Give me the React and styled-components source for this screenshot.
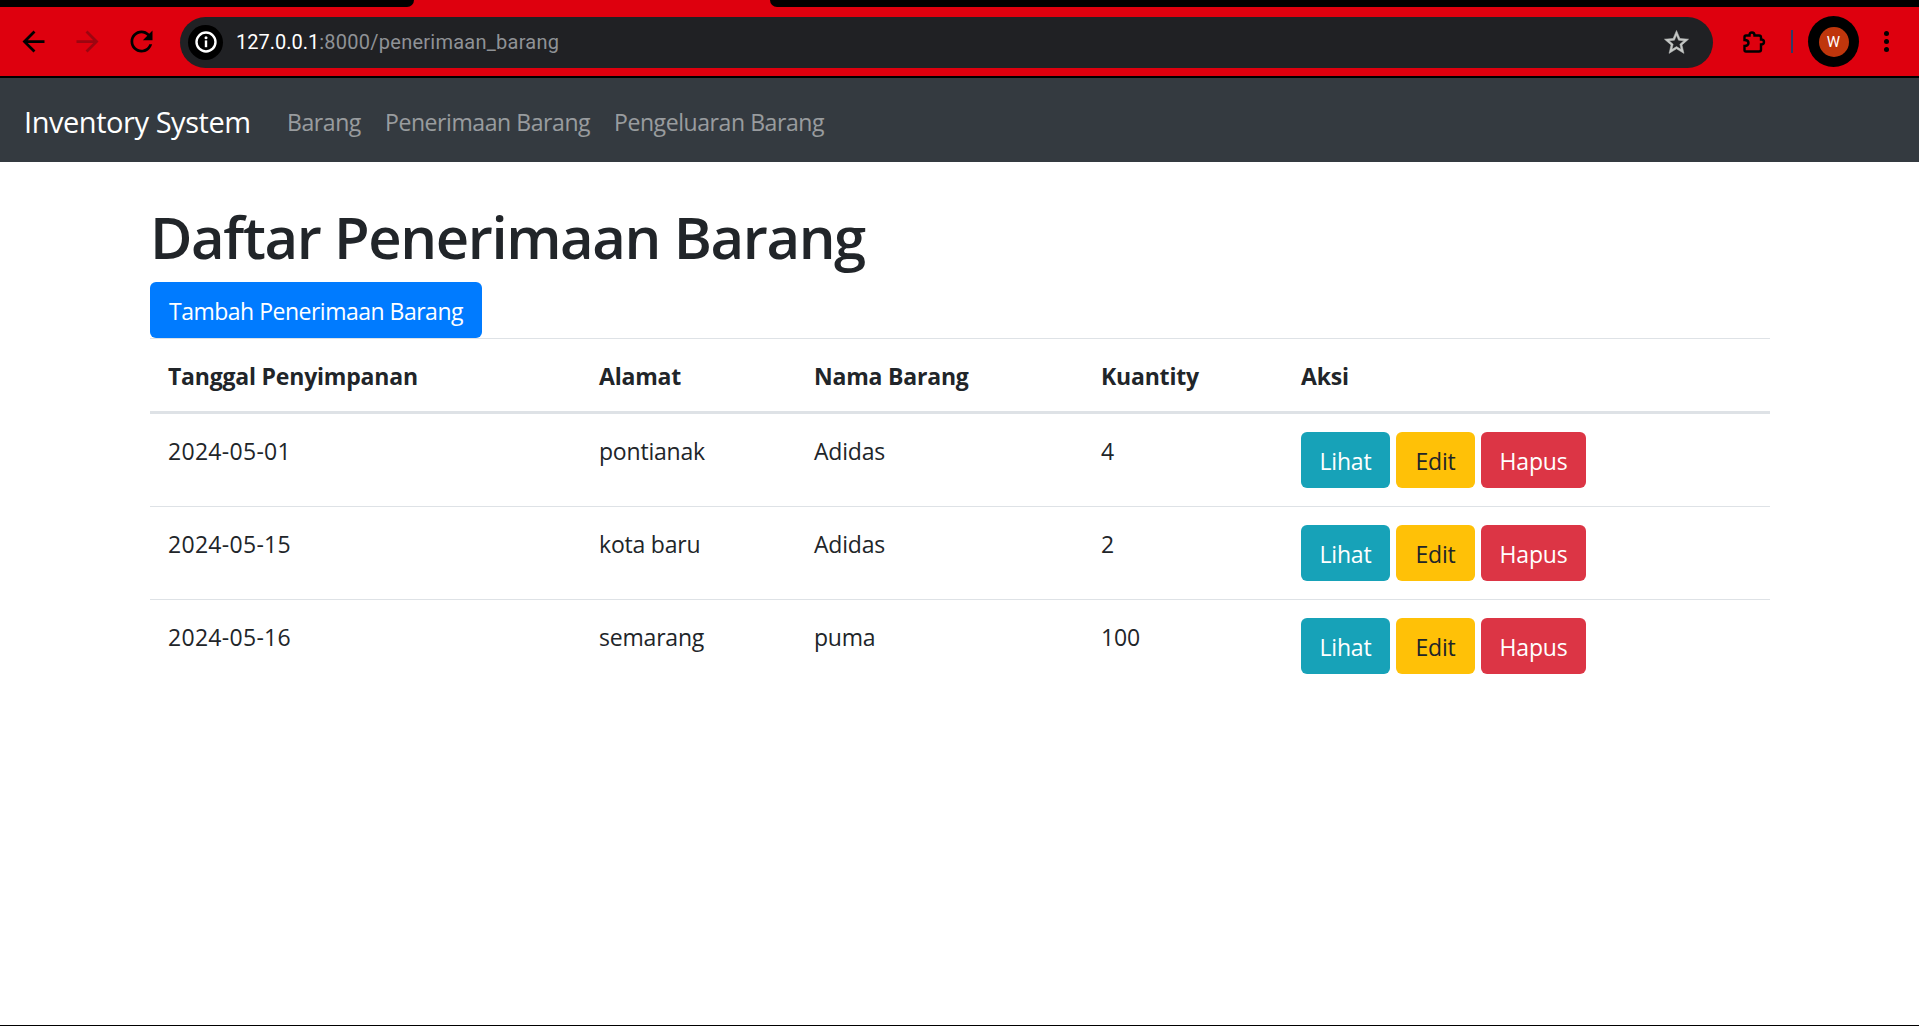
import styled, { createGlobalStyle } from "styled-components";

const GlobalStyle = createGlobalStyle`
    html, body {
        margin: 0;
        padding: 0;
        background: #fff;
    }
    * {
        box-sizing: border-box;
    }
`;

const rows = [
    { date: "2024-05-01", address: "pontianak", item: "Adidas", qty: 4 },
    { date: "2024-05-15", address: "kota baru", item: "Adidas", qty: 2 },
    { date: "2024-05-16", address: "semarang", item: "puma", qty: 100 },
];

const columns = [
    { label: "Tanggal Penyimpanan", width: 431 },
    { label: "Alamat", width: 215 },
    { label: "Nama Barang", width: 287 },
    { label: "Kuantity", width: 200 },
    { label: "Aksi", width: 487 },
];

const navLinks = [
    { label: "Barang", width: 73 },
    { label: "Penerimaan Barang", width: 204 },
    { label: "Pengeluaran Barang", width: 211 },
];

const Icon = ({ d, color = "#000", size = 33, stroke = 0 }) => (
    <svg width={size} height={size} viewBox="0 0 24 24" fill={color} stroke={color} strokeWidth={stroke}>
        <path d={d} />
    </svg>
);

const BACK = "M20 11H7.83l5.59-5.59L12 4l-8 8 8 8 1.41-1.41L7.83 13H20v-2z";
const FORWARD = "M4 11h12.17l-5.59-5.59L12 4l8 8-8 8-1.41-1.41L16.17 13H4v-2z";
const RELOAD = "M17.65 6.35C16.2 4.9 14.21 4 12 4c-4.42 0-7.99 3.58-7.99 8s3.57 8 7.99 8c3.73 0 6.84-2.55 7.73-6h-2.08c-.82 2.33-3.04 4-5.65 4-3.31 0-6-2.69-6-6s2.69-6 6-6c1.66 0 3.14.69 4.22 1.78L13 11h7V4l-2.35 2.35z";
const STAR = "M22 9.24l-7.19-.62L12 2 9.19 8.63 2 9.24l5.46 4.73L5.82 21 12 17.27 18.18 21l-1.63-7.03L22 9.24zM12 15.4l-3.76 2.27 1-4.28-3.32-2.88 4.38-.38L12 6.1l1.71 4.04 4.38.38-3.32 2.88 1 4.28L12 15.4z";
const PUZZLE = "M3 4.5H6.5C6.5 2.5 7.5 1.5 9 1.5C10.5 1.5 11.5 2.5 11.5 4.5H16Q18 4.5 18 6.5V8.5C20 8.5 21 9.5 21 11C21 12.5 20 13.5 18 13.5V18.5Q18 20.5 16 20.5H3Q1.5 20.5 1.5 19V15C4 15 5.5 14 5.5 12C5.5 10 4 9 1.5 9V6Q1.5 4.5 3 4.5Z";

const App = () => {
    return (
        <Page>
            <GlobalStyle />
            <BrowserChrome>
                <TabStrip>
                    <TabsLeft />
                    <ActiveTab />
                    <TabsRight />
                </TabStrip>
                <Toolbar>
                    <NavButton><Icon d={BACK} /></NavButton>
                    <NavButton><Icon d={FORWARD} color="#9c0510" /></NavButton>
                    <NavButton><Icon d={RELOAD} /></NavButton>
                    <AddressBar>
                        <InfoChip>
                            <svg width="26" height="26" viewBox="0 0 26 26" fill="none">
                                <circle cx="13" cy="13" r="9.5" stroke="#fff" strokeWidth="2.4" />
                                <circle cx="13" cy="8.8" r="1.5" fill="#fff" />
                                <rect x="11.8" y="11.4" width="2.4" height="6.8" fill="#fff" />
                            </svg>
                        </InfoChip>
                        <Url><UrlHost>127.0.0.1</UrlHost>:8000/penerimaan_barang</Url>
                        <StarSlot><Icon d={STAR} color="#c4c7c5" size={29} stroke={0.4} /></StarSlot>
                    </AddressBar>
                    <ExtensionSlot>
                        <svg width="30" height="30" viewBox="-4 -4 30 30" fill="none" stroke="#000" strokeWidth="2.4">
                            <path d={PUZZLE} />
                        </svg>
                    </ExtensionSlot>
                    <Divider />
                    <AvatarRing><Avatar>W</Avatar></AvatarRing>
                    <MenuDots><Dot /><Dot /><Dot /></MenuDots>
                </Toolbar>
            </BrowserChrome>

            <Navbar>
                <Brand>Inventory System</Brand>
                <NavLinks>
                    {navLinks.map((link) => (
                        <NavLink key={link.label} $width={link.width}>{link.label}</NavLink>
                    ))}
                </NavLinks>
            </Navbar>

            <Main>
                <Title>Daftar Penerimaan Barang</Title>
                <AddButton>Tambah Penerimaan Barang</AddButton>
                <Table>
                    <colgroup>
                        {columns.map((col) => <col key={col.label} width={col.width} />)}
                    </colgroup>
                    <thead>
                        <tr>
                            {columns.map((col) => <Th key={col.label}>{col.label}</Th>)}
                        </tr>
                    </thead>
                    <tbody>
                        {rows.map((row) => (
                            <Tr key={row.date}>
                                <DateCell>{row.date}</DateCell>
                                <TextCell>{row.address}</TextCell>
                                <TextCell>{row.item}</TextCell>
                                <TextCell>{row.qty}</TextCell>
                                <Td>
                                    <Actions>
                                        <ActionButton $bg="#17a2b8" $w={89}>Lihat</ActionButton>
                                        <ActionButton $bg="#ffc107" $color="#212529" $w={79}>Edit</ActionButton>
                                        <ActionButton $bg="#dc3545" $w={105}>Hapus</ActionButton>
                                    </Actions>
                                </Td>
                            </Tr>
                        ))}
                    </tbody>
                </Table>
            </Main>
        </Page>
    );
};

export default App;

const Page = styled.div`
    height: 1026px;
    display: flex;
    flex-direction: column;
    overflow: hidden;
    border-bottom: 1px solid #000;
    font-family: "Open Sans", "Noto Sans", sans-serif;
    color: #212529;
`;

const BrowserChrome = styled.header`
    background: #de000e;
    border-bottom: 2px solid #000;
`;

const TabStrip = styled.div`
    display: flex;
    height: 7px;
`;

const TabsLeft = styled.div`
    width: 414px;
    background: #000;
    border-bottom-right-radius: 7px;
`;

const ActiveTab = styled.div`
    width: 356px;
`;

const TabsRight = styled.div`
    flex: 1;
    background: #000;
    border-bottom-left-radius: 7px;
`;

const Toolbar = styled.div`
    height: 69px;
    display: flex;
    align-items: center;
    padding-left: 6px;
`;

const NavButton = styled.div`
    width: 54px;
    height: 54px;
    display: flex;
    align-items: center;
    justify-content: center;
`;

const AddressBar = styled.div`
    width: 1533px;
    height: 51px;
    margin-left: 12px;
    margin-top: 1px;
    display: flex;
    align-items: center;
    padding: 0 22px 0 8px;
    background: #202124;
    border-radius: 26px;
`;

const InfoChip = styled.div`
    width: 35px;
    height: 35px;
    display: flex;
    align-items: center;
    justify-content: center;
    border-radius: 50%;
    background: #000;
`;

const Url = styled.div`
    flex: 1;
    margin-left: 13px;
    font-family: Roboto, sans-serif;
    font-size: 20px;
    letter-spacing: 0.25px;
    color: #8f9296;
`;

const UrlHost = styled.span`
    letter-spacing: 0;
    color: #fff;
`;

const StarSlot = styled.div`
    display: flex;
`;

const ExtensionSlot = styled.div`
    display: flex;
    margin-left: 26px;
`;

const Divider = styled.div`
    width: 2px;
    height: 23px;
    margin-left: 22px;
    background: #2f3a66;
`;

const AvatarRing = styled.div`
    width: 51px;
    height: 51px;
    margin-left: 15px;
    display: flex;
    align-items: center;
    justify-content: center;
    border-radius: 50%;
    background: #000;
`;

const Avatar = styled.div`
    width: 30px;
    height: 30px;
    display: flex;
    align-items: center;
    justify-content: center;
    border-radius: 50%;
    background: #bf360c;
    color: #fff;
    font-family: Roboto, sans-serif;
    font-size: 15px;
`;

const MenuDots = styled.div`
    margin-left: 25px;
    display: flex;
    flex-direction: column;
    gap: 3px;
`;

const Dot = styled.span`
    width: 5px;
    height: 5px;
    border-radius: 50%;
    background: #000;
`;

const Navbar = styled.nav`
    height: 84px;
    display: flex;
    align-items: center;
    padding: 2px 24px 0;
    background: #343a40;
`;

const Brand = styled.a`
    width: 226px;
    font-size: 29px;
    letter-spacing: -0.45px;
    white-space: nowrap;
    color: #fff;
`;

const NavLinks = styled.div`
    display: flex;
    gap: 25px;
    margin-left: 37px;
    padding-top: 1px;
`;

const NavLink = styled.a`
    width: ${(p) => p.$width}px;
    font-size: 23px;
    letter-spacing: -0.42px;
    white-space: nowrap;
    color: rgba(255, 255, 255, 0.5);
`;

const Main = styled.main`
    width: 1620px;
    margin-left: 150px;
    padding-top: 39px;
`;

const Title = styled.h1`
    margin: 0 0 9px;
    font-size: 58px;
    line-height: 72px;
    font-weight: 600;
    letter-spacing: -1.4px;
`;

const AddButton = styled.button`
    display: block;
    width: 332px;
    height: 56px;
    padding: 2px 0 0;
    border: 0;
    border-radius: 6px;
    background: #007bff;
    color: #fff;
    font: inherit;
    font-size: 23px;
    letter-spacing: -0.5px;
`;

const Table = styled.table`
    width: 1620px;
    table-layout: fixed;
    border-collapse: collapse;
    font-size: 23px;
    letter-spacing: -0.2px;
`;

const Th = styled.th`
    height: 74px;
    padding: 19px 18px 17px;
    text-align: left;
    font-weight: 700;
    line-height: 36px;
    vertical-align: top;
    border-top: 1px solid #dee2e6;
    border-bottom: 3px solid #dee2e6;
`;

const Tr = styled.tr`
    & + & td {
        border-top: 1px solid #dee2e6;
    }
`;

const Td = styled.td`
    padding: 18px;
    line-height: 36px;
    vertical-align: top;
`;

const TextCell = styled(Td)`
    padding-top: 19px;
`;

const DateCell = styled(TextCell)`
    letter-spacing: 0.3px;
`;

const Actions = styled.div`
    display: flex;
    gap: 6px;
`;

const ActionButton = styled.button`
    width: ${(p) => p.$w}px;
    height: 56px;
    padding: 2px 0 0;
    border: 0;
    border-radius: 6px;
    background: ${(p) => p.$bg};
    color: ${(p) => p.$color || "#fff"};
    font: inherit;
    letter-spacing: inherit;
`;
